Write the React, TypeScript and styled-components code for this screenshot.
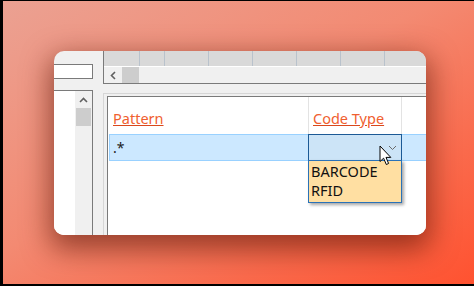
import React from "react";
import styled, { createGlobalStyle } from "styled-components";

const GlobalStyle = createGlobalStyle`
  html, body {
    margin: 0;
    padding: 0;
  }
  body {
    font-family: "Noto Sans", "Liberation Sans", sans-serif;
  }
`;

const headerCells = [36, 25, 44, 44, 44, 44, 44, 60];

export default function App() {
  return (
    <>
      <GlobalStyle />
      <Desktop>
        <Window>
          <LeftPane>
            <SearchBox />
            <ListBox>
              <ListArea />
              <VScroll>
                <ArrowUp>
                  <svg width="9" height="6" viewBox="0 0 9 6">
                    <path d="M1 5 L4.5 1.5 L8 5" fill="none" stroke="#606060" strokeWidth="1.6" />
                  </svg>
                </ArrowUp>
                <VThumb />
              </VScroll>
            </ListBox>
          </LeftPane>

          <RightPane>
            <TopPanel>
              <HeaderStrip>
                {headerCells.map((w, i) => (
                  <HeaderCell key={i} $w={w} />
                ))}
              </HeaderStrip>
              <HScroll>
                <ArrowLeft>
                  <svg width="6" height="9" viewBox="0 0 6 9">
                    <path d="M5 1 L1.5 4.5 L5 8" fill="none" stroke="#606060" strokeWidth="1.6" />
                  </svg>
                </ArrowLeft>
                <HThumb />
              </HScroll>
            </TopPanel>

            <GridOuter>
              <Grid>
                <HeaderRow>
                  <ColHead $w={200}>
                    <HeadLink>Pattern</HeadLink>
                  </ColHead>
                  <ColHead $w={93}>
                    <HeadLink>Code Type</HeadLink>
                  </ColHead>
                  <ColHead $w={40} />
                </HeaderRow>

                <DataRow>
                  <Cell $w={198}>.*</Cell>
                  <ComboCell>
                    <svg width="9" height="6" viewBox="0 0 9 6">
                      <path d="M1 1 L4.5 4.5 L8 1" fill="none" stroke="#6a6a6a" strokeWidth="1" />
                    </svg>
                    <DropList>
                      <DropItem>BARCODE</DropItem>
                      <DropItem>RFID</DropItem>
                    </DropList>
                    <Cursor width="14" height="21" viewBox="0 0 14 21">
                      <path
                        d="M1 1 L1 16.5 L4.6 13.2 L7.3 19.5 L9.6 18.5 L7 12.4 L11.8 12.4 Z"
                        fill="#fff"
                        stroke="#000"
                        strokeWidth="1"
                        strokeLinejoin="miter"
                      />
                    </Cursor>
                  </ComboCell>
                </DataRow>
              </Grid>
            </GridOuter>
          </RightPane>
        </Window>
      </Desktop>
    </>
  );
}

const Desktop = styled.div`
  width: 474px;
  height: 286px;
  box-sizing: border-box;
  border-left: 3px solid #000;
  border-top: 1px solid #000;
  border-bottom: 2px solid #000;
  background: linear-gradient(150deg, #eba192 0%, #f38a72 45%, #fa6a4c 75%, #ff5230 100%);
  padding: 50px 0 0 51px;
  overflow: hidden;
`;

const Window = styled.div`
  width: 372px;
  height: 184px;
  border-radius: 10px;
  overflow: hidden;
  background: #f0f0f0;
  display: flex;
  box-shadow: 0 10px 28px 4px rgba(90, 20, 5, 0.6);
`;

const LeftPane = styled.div`
  width: 49px;
  flex-shrink: 0;
  display: flex;
  flex-direction: column;
  padding-top: 13px;
`;

const SearchBox = styled.div`
  width: 38px;
  height: 13px;
  background: #fff;
  border: 1px solid #7a7a7a;
  border-left: none;
`;

const ListBox = styled.div`
  margin-top: 11px;
  width: 38px;
  flex: 1;
  display: flex;
  background: #fff;
  border-top: 1px solid #7a7a7a;
  border-right: 1px solid #7a7a7a;
`;

const ListArea = styled.div`
  width: 21px;
  background: #fff;
`;

const VScroll = styled.div`
  width: 17px;
  background: #f0f0f0;
  display: flex;
  flex-direction: column;
  align-items: center;
`;

const ArrowUp = styled.div`
  height: 17px;
  display: flex;
  align-items: center;
  justify-content: center;
`;

const VThumb = styled.div`
  width: 15px;
  height: 18px;
  background: #cdcdcd;
`;

const RightPane = styled.div`
  flex: 1;
  min-width: 0;
  overflow: hidden;
  display: flex;
  flex-direction: column;
`;

const TopPanel = styled.div`
  height: 32px;
  border-left: 1px solid #7a7a7a;
  border-bottom: 1px solid #7a7a7a;
  display: flex;
  flex-direction: column;
`;

const HeaderStrip = styled.div`
  height: 15px;
  display: flex;
  background: #d9d9d9;
  border-bottom: 1px solid #fff;
`;

const HeaderCell = styled.div<{ $w: number }>`
  width: ${(p) => p.$w}px;
  flex-shrink: 0;
  box-sizing: border-box;
  border-right: 1px solid #b9c2cc;
`;

const HScroll = styled.div`
  flex: 1;
  display: flex;
  align-items: stretch;
  background: #f0f0f0;
`;

const ArrowLeft = styled.div`
  width: 18px;
  display: flex;
  align-items: center;
  justify-content: center;
`;

const HThumb = styled.div`
  width: 17px;
  background: #cdcdcd;
`;

const GridOuter = styled.div`
  margin-top: 9px;
  flex: 1;
  border-left: 1px solid #d6d6d6;
  border-top: 1px solid #d6d6d6;
  padding: 2px 0 0 3px;
  background: #f0f0f0;
  display: flex;
`;

const Grid = styled.div`
  flex: 1;
  min-width: 0;
  background: #fff;
  border-left: 1px solid #7a7a7a;
  border-top: 1px solid #7a7a7a;
  padding-left: 1px;
`;

const HeaderRow = styled.div`
  height: 37px;
  display: flex;
`;

const ColHead = styled.div<{ $w: number }>`
  width: ${(p) => p.$w}px;
  flex-shrink: 0;
  box-sizing: border-box;
  border-right: 1px solid #e3e3e3;
  padding: 10px 0 0 4px;
`;

const HeadLink = styled.span`
  font-size: 14.5px;
  color: #f0602f;
  text-decoration: underline;
  text-decoration-color: #d9481c;
  text-underline-offset: 1px;
  white-space: nowrap;
`;

const DataRow = styled.div`
  height: 27px;
  box-sizing: border-box;
  display: flex;
  background: #cce8ff;
  border: 1px solid #99d1ff;
  border-right: none;
`;

const Cell = styled.div<{ $w: number }>`
  width: ${(p) => p.$w}px;
  flex-shrink: 0;
  box-sizing: border-box;
  padding: 3px 0 0 3px;
  font-size: 14px;
  color: #1a1a1a;
`;

const ComboCell = styled.div`
  position: relative;
  width: 94px;
  height: 27px;
  margin-top: -1px;
  flex-shrink: 0;
  box-sizing: border-box;
  background: #cce4f7;
  border: 1px solid #1c5a96;
  display: flex;
  align-items: center;
  justify-content: flex-end;
  padding-right: 4px;
`;

const DropList = styled.div`
  position: absolute;
  left: -1px;
  top: 25px;
  width: 94px;
  box-sizing: border-box;
  background: #ffdfa2;
  border: 1px solid #2a72b8;
  box-shadow: 2px 2px 3px rgba(0, 0, 0, 0.35);
  padding: 1px 0 2px;
  z-index: 2;
`;

const DropItem = styled.div`
  font-size: 14.5px;
  line-height: 19px;
  color: #111;
  padding-left: 2px;
`;

const Cursor = styled.svg`
  position: absolute;
  left: 70px;
  top: 10px;
  z-index: 3;
`;
